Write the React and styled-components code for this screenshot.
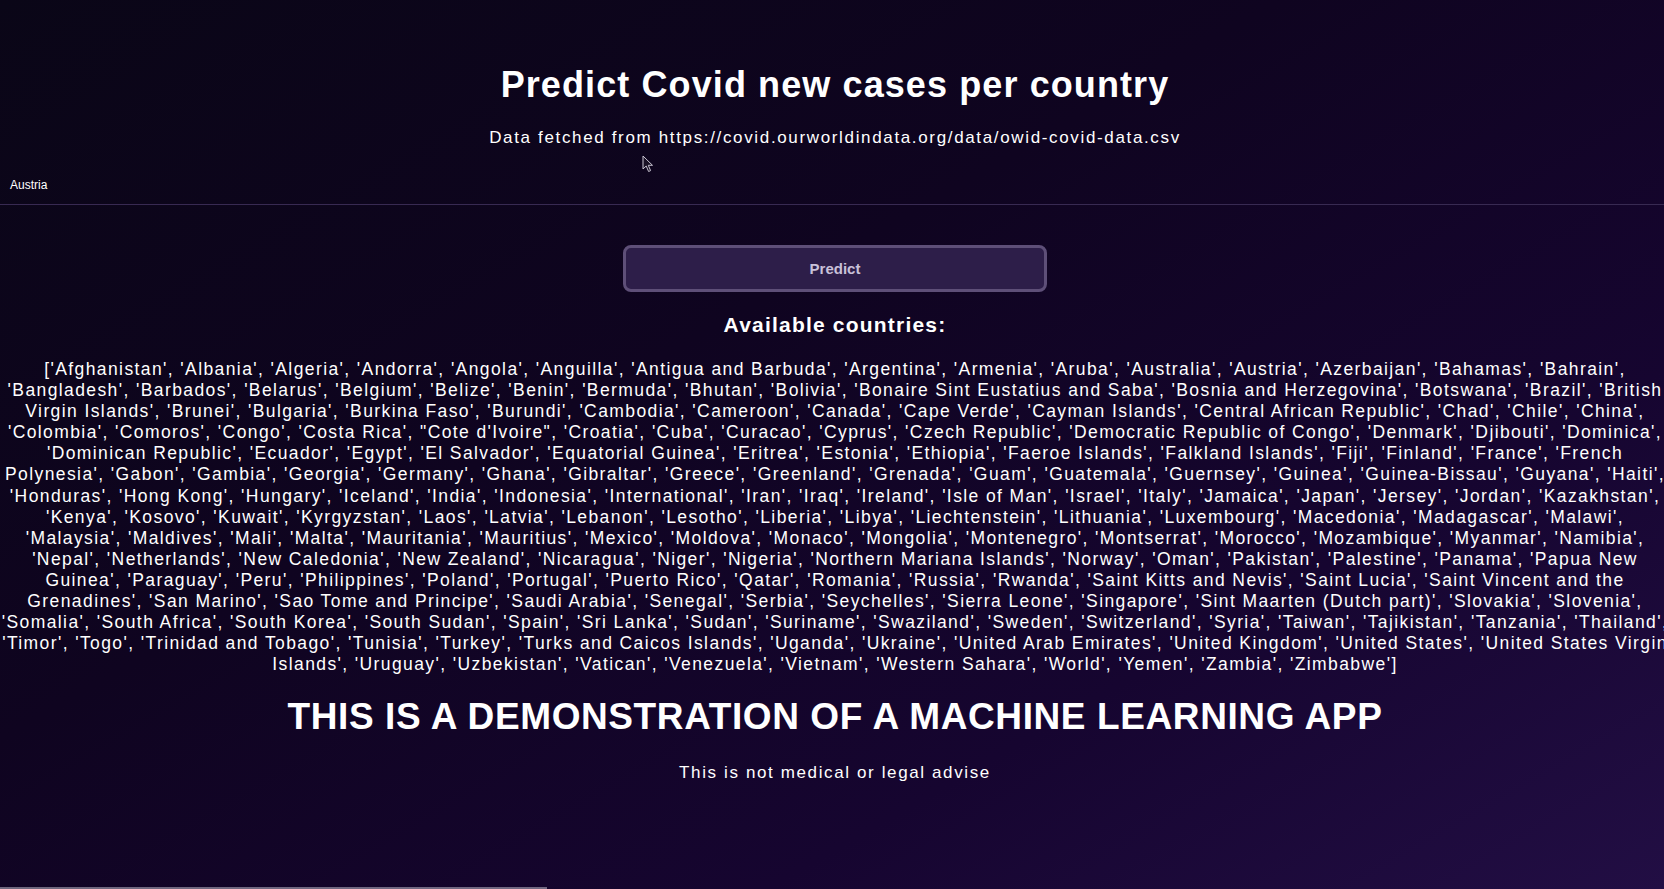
import React from 'react'
import styled, { createGlobalStyle } from 'styled-components'

const GlobalStyle = createGlobalStyle`
	html, body {
		margin: 0;
		padding: 0;
		height: 100%;
		overflow: hidden;
	}
	body {
		background: linear-gradient(150deg, #0a0617 0%, #0f0420 40%, #160530 72%, #220e44 100%);
		color: #ffffff;
		font-family: 'Liberation Sans', Arial, Helvetica, sans-serif;
	}
`

const Page = styled.main`
	display: flex;
	flex-direction: column;
	align-items: center;
	padding: 63px 0 0 6px;
	min-height: 100vh;
	box-sizing: border-box;
`
const Title = styled.h1`
	margin: 0;
	font-size: 36px;
	line-height: 43px;
	font-weight: 700;
	letter-spacing: 1.1px;
`
const Subtitle = styled.p`
	margin: 22px 0 0;
	font-size: 17px;
	line-height: 20px;
	letter-spacing: 1.65px;
`
const InputRow = styled.div`
	align-self: stretch;
	display: flex;
	align-items: center;
	height: 38px;
	margin: 18px 0 0 -6px;
	padding: 0 10px;
	border-bottom: 1px solid #382a52;
	font-size: 12px;
	color: #ffffff;
`
const PredictButton = styled.button`
	margin-top: 40px;
	width: 424px;
	height: 47px;
	border: 3px solid #5e4f78;
	border-radius: 8px;
	background: #2d1e49;
	color: #c9c1d9;
	font-family: inherit;
	font-size: 15px;
	font-weight: 700;
	cursor: pointer;
`
const SectionTitle = styled.h2`
	margin: 20px 0 0;
	font-size: 21px;
	line-height: 25px;
	font-weight: 700;
	letter-spacing: 1.2px;
`
const CountryList = styled.div`
	margin-top: 22px;
	display: flex;
	flex-direction: column;
	align-items: center;
	font-size: 17.5px;
	line-height: 21.1px;
	letter-spacing: 1.4px;
`
const CountryLine = styled.span`
	white-space: nowrap;
`
const Banner = styled.h2`
	margin: 19px 0 0;
	font-size: 37px;
	line-height: 46px;
	font-weight: 700;
	letter-spacing: 0.6px;
`
const Disclaimer = styled.p`
	margin: 23px 0 0;
	font-size: 17px;
	line-height: 20px;
	letter-spacing: 1.62px;
`
const Cursor = styled.svg`
	position: fixed;
	left: 642px;
	top: 155px;
	width: 12px;
	height: 18px;
`
const ScrollBar = styled.div`
	position: fixed;
	left: 0;
	bottom: 0;
	width: 547px;
	height: 2px;
	background: rgba(190, 185, 200, 0.55);
`

const countryLines = [
	"['Afghanistan', 'Albania', 'Algeria', 'Andorra', 'Angola', 'Anguilla', 'Antigua and Barbuda', 'Argentina', 'Armenia', 'Aruba', 'Australia', 'Austria', 'Azerbaijan', 'Bahamas', 'Bahrain',",
	"'Bangladesh', 'Barbados', 'Belarus', 'Belgium', 'Belize', 'Benin', 'Bermuda', 'Bhutan', 'Bolivia', 'Bonaire Sint Eustatius and Saba', 'Bosnia and Herzegovina', 'Botswana', 'Brazil', 'British",
	"Virgin Islands', 'Brunei', 'Bulgaria', 'Burkina Faso', 'Burundi', 'Cambodia', 'Cameroon', 'Canada', 'Cape Verde', 'Cayman Islands', 'Central African Republic', 'Chad', 'Chile', 'China',",
	"'Colombia', 'Comoros', 'Congo', 'Costa Rica', \"Cote d'Ivoire\", 'Croatia', 'Cuba', 'Curacao', 'Cyprus', 'Czech Republic', 'Democratic Republic of Congo', 'Denmark', 'Djibouti', 'Dominica',",
	"'Dominican Republic', 'Ecuador', 'Egypt', 'El Salvador', 'Equatorial Guinea', 'Eritrea', 'Estonia', 'Ethiopia', 'Faeroe Islands', 'Falkland Islands', 'Fiji', 'Finland', 'France', 'French",
	"Polynesia', 'Gabon', 'Gambia', 'Georgia', 'Germany', 'Ghana', 'Gibraltar', 'Greece', 'Greenland', 'Grenada', 'Guam', 'Guatemala', 'Guernsey', 'Guinea', 'Guinea-Bissau', 'Guyana', 'Haiti',",
	"'Honduras', 'Hong Kong', 'Hungary', 'Iceland', 'India', 'Indonesia', 'International', 'Iran', 'Iraq', 'Ireland', 'Isle of Man', 'Israel', 'Italy', 'Jamaica', 'Japan', 'Jersey', 'Jordan', 'Kazakhstan',",
	"'Kenya', 'Kosovo', 'Kuwait', 'Kyrgyzstan', 'Laos', 'Latvia', 'Lebanon', 'Lesotho', 'Liberia', 'Libya', 'Liechtenstein', 'Lithuania', 'Luxembourg', 'Macedonia', 'Madagascar', 'Malawi',",
	"'Malaysia', 'Maldives', 'Mali', 'Malta', 'Mauritania', 'Mauritius', 'Mexico', 'Moldova', 'Monaco', 'Mongolia', 'Montenegro', 'Montserrat', 'Morocco', 'Mozambique', 'Myanmar', 'Namibia',",
	"'Nepal', 'Netherlands', 'New Caledonia', 'New Zealand', 'Nicaragua', 'Niger', 'Nigeria', 'Northern Mariana Islands', 'Norway', 'Oman', 'Pakistan', 'Palestine', 'Panama', 'Papua New",
	"Guinea', 'Paraguay', 'Peru', 'Philippines', 'Poland', 'Portugal', 'Puerto Rico', 'Qatar', 'Romania', 'Russia', 'Rwanda', 'Saint Kitts and Nevis', 'Saint Lucia', 'Saint Vincent and the",
	"Grenadines', 'San Marino', 'Sao Tome and Principe', 'Saudi Arabia', 'Senegal', 'Serbia', 'Seychelles', 'Sierra Leone', 'Singapore', 'Sint Maarten (Dutch part)', 'Slovakia', 'Slovenia',",
	"'Somalia', 'South Africa', 'South Korea', 'South Sudan', 'Spain', 'Sri Lanka', 'Sudan', 'Suriname', 'Swaziland', 'Sweden', 'Switzerland', 'Syria', 'Taiwan', 'Tajikistan', 'Tanzania', 'Thailand',",
	"'Timor', 'Togo', 'Trinidad and Tobago', 'Tunisia', 'Turkey', 'Turks and Caicos Islands', 'Uganda', 'Ukraine', 'United Arab Emirates', 'United Kingdom', 'United States', 'United States Virgin",
	"Islands', 'Uruguay', 'Uzbekistan', 'Vatican', 'Venezuela', 'Vietnam', 'Western Sahara', 'World', 'Yemen', 'Zambia', 'Zimbabwe']",
]

const App = () => {
	return (
		<>
			<GlobalStyle />
			<Page>
				<Title>Predict Covid new cases per country</Title>
				<Subtitle>Data fetched from https://covid.ourworldindata.org/data/owid-covid-data.csv</Subtitle>
				<InputRow>Austria</InputRow>
				<PredictButton>Predict</PredictButton>
				<SectionTitle>Available countries:</SectionTitle>
				<CountryList>
					{countryLines.map(line => (
						<CountryLine key={line}>{line}</CountryLine>
					))}
				</CountryList>
				<Banner>THIS IS A DEMONSTRATION OF A MACHINE LEARNING APP</Banner>
				<Disclaimer>This is not medical or legal advise</Disclaimer>
			</Page>
			<Cursor viewBox='0 0 12 18'>
				<path d='M1 1 L1 14 L4.2 11 L6.6 16.5 L8.6 15.6 L6.3 10.3 L10.5 10.3 Z' fill='#1a1226' stroke='#c9c4d2' strokeWidth='1' strokeLinejoin='round' />
			</Cursor>
			<ScrollBar />
		</>
	)
}

export default App
